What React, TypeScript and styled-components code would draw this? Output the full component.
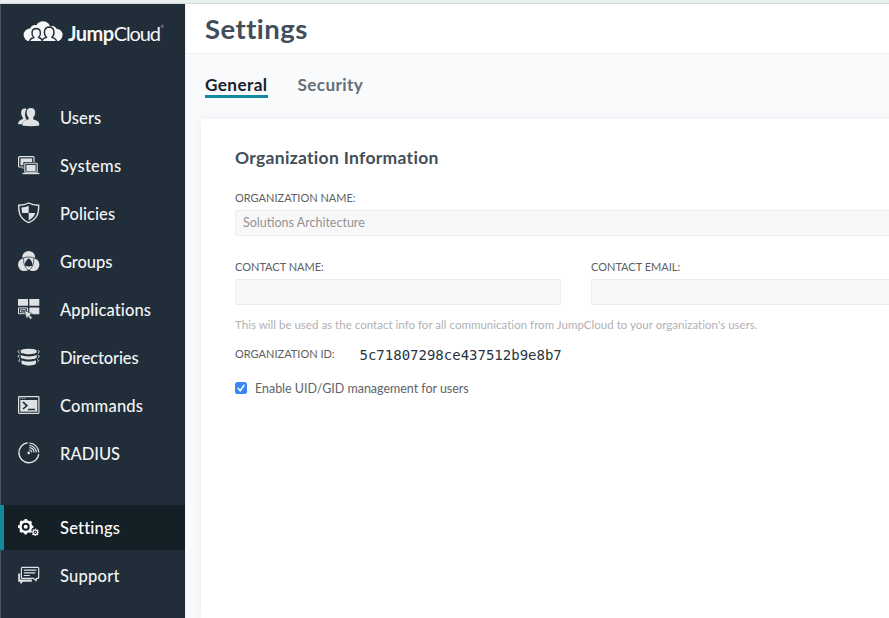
import React from 'react';
import styled, { createGlobalStyle } from 'styled-components';

const INK = '#212d38';
const LIGHT = '#dfe2e5';

const GlobalStyle = createGlobalStyle`
  * { box-sizing: border-box; }
  html, body, #root { height: 100%; }
  body {
    margin: 0;
    overflow: hidden;
    background: #f9fafc;
    font-family: Lato, "Open Sans", sans-serif;
    font-variant-ligatures: none;
  }
  h1, h2 { margin: 0; }
`;

const Page = styled.div`
  display: flex;
  flex-direction: column;
  height: 618px;
  width: 100%;
`;

const TopStrip = styled.div`
  flex: none;
  height: 4px;
  background: #e9eeee;
  border-bottom: 1px solid #d3d9da;
`;

const Body = styled.div`
  display: flex;
  flex: 1;
  min-height: 0;
`;

const Sidebar = styled.aside`
  flex: none;
  width: 185px;
  background: ${INK};
  box-shadow: inset 1px 0 #46535c;
`;

const Brand = styled.div`
  display: flex;
  align-items: flex-start;
  height: 91px;
  padding: 17px 0 0 23px;
`;

const Wordmark = styled.div`
  display: flex;
  margin: 0 0 0 5px;
  color: #f4f6f7;
  font-size: 20px;
  line-height: 24px;
`;

const Jump = styled.span`
  font-weight: 700;
  letter-spacing: -0.5px;
`;

const Cloud = styled.span`
  font-weight: 400;
  letter-spacing: -1.1px;
`;

const Trademark = styled.span`
  margin-left: 1px;
  font-size: 3px;
  line-height: 12px;
`;

const NavList = styled.nav`
  display: flex;
  flex-direction: column;
  gap: 3px;
`;

const NavItem = styled.a<{ $active?: boolean; $tracking: number; $spaced?: boolean }>`
  display: flex;
  align-items: center;
  height: 45px;
  margin-top: ${(p) => (p.$spaced ? '26px' : '0')};
  padding-left: ${(p) => (p.$active ? '13px' : '17px')};
  border-left: ${(p) => (p.$active ? '4px solid #128a9c' : '0')};
  background: ${(p) => (p.$active ? '#151f26' : 'transparent')};
  color: ${(p) => (p.$active ? '#ffffff' : '#f3f5f6')};
  font-size: 16.5px;
  font-weight: 500;
  letter-spacing: ${(p) => p.$tracking}px;
`;

const Glyph = styled.svg`
  flex: none;
  width: 24px;
  height: 23px;
  margin-right: 19px;
  overflow: visible;
`;

const Main = styled.main`
  display: flex;
  flex-direction: column;
  flex: 1;
  min-width: 0;
  background: #f9fafc;
  border-left: 1px solid #eef0f2;
`;

const Header = styled.header`
  flex: none;
  height: 50px;
  padding: 8px 0 0 19px;
  background: #ffffff;
  border-bottom: 1px solid #eff1f3;
`;

const Title = styled.h1`
  color: #424e5a;
  font-size: 27.5px;
  font-weight: 700;
  line-height: 34px;
  letter-spacing: 0.45px;
`;

const Tabs = styled.div`
  display: flex;
  flex: none;
  gap: 30px;
  height: 65px;
  padding: 20px 0 0 19px;
`;

const Tab = styled.a<{ $active?: boolean }>`
  height: 24px;
  border-bottom: 3px solid ${(p) => (p.$active ? '#138a9c' : 'transparent')};
  color: ${(p) => (p.$active ? '#17222c' : '#656f78')};
  font-size: 17.2px;
  font-weight: 700;
  line-height: 21px;
  letter-spacing: ${(p) => (p.$active ? 0.4 : 0.35)}px;
`;

const Card = styled.section`
  flex: 1;
  margin-left: 15px;
  padding: 28px 0 0 34px;
  background: #ffffff;
  border-radius: 3px 0 0 0;
  box-shadow: 0 0 10px rgba(40, 55, 70, 0.08);
`;

const CardTitle = styled.h2`
  margin-bottom: 22px;
  color: #424e5a;
  font-size: 17.5px;
  font-weight: 700;
  line-height: 21px;
  letter-spacing: 0.3px;
`;

const Fields = styled.div`
  display: grid;
  grid-template-columns: 326px 326px;
  column-gap: 30px;
  row-gap: 23px;
`;

const Field = styled.label<{ $wide?: boolean }>`
  display: flex;
  flex-direction: column;
  grid-column: ${(p) => (p.$wide ? '1 / -1' : 'auto')};
`;

const FieldLabel = styled.span`
  height: 20px;
  color: #5d5f62;
  font-size: 11px;
  line-height: 16px;
`;

const Input = styled.input`
  width: 100%;
  height: 26px;
  padding: 0 7px 1px;
  background: #f8f8f8;
  border: 1px solid #ededee;
  border-radius: 2px;
  color: #929294;
  font: 12.5px Lato, sans-serif;
`;

const Hint = styled.p`
  margin: 12px 0 14px;
  color: #b0b1b3;
  font-size: 11.5px;
  line-height: 16px;
  letter-spacing: 0.02px;
`;

const IdRow = styled.div`
  display: flex;
  align-items: flex-start;
  height: 17px;
`;

const IdLabel = styled.span`
  width: 124.5px;
  color: #5d5f62;
  font-size: 11px;
  line-height: 14px;
`;

const IdValue = styled.code`
  color: #273440;
  font: 14px/17px "DejaVu Sans Mono", monospace;
`;

const CheckRow = styled.div`
  display: flex;
  align-items: center;
  height: 16px;
  margin-top: 16px;
  color: #626467;
  font-size: 12.5px;
  letter-spacing: -0.03px;
`;

const CheckBox = styled.span`
  display: flex;
  width: 12px;
  height: 12px;
  margin-right: 8px;
  background: #3b86f7;
  border-radius: 2.5px;
`;

const LogoMark = () => (
  <svg width="40" height="22" viewBox="0 0 40 22">
    <g fill="#f4f6f7">
      <circle cx="7" cy="14" r="6.4" />
      <circle cx="12" cy="9" r="5" />
      <circle cx="20" cy="7.8" r="7.6" />
      <circle cx="33.3" cy="14" r="6.3" />
      <circle cx="29" cy="10" r="5" />
      <rect x="7" y="10" width="26" height="10" />
    </g>
    <g fill="#f4f6f7" stroke={INK} strokeWidth="1.4">
      <path d="M6.5 20.5c.2-2.400 1.800-3.200 4.200-4-2.600-2.800-2.600-8.800 2.500-9 5.100.2 5.100 6.200 2.500 9 2.400.8 4 1.600 4.200 4" />
      <path d="M18.800 20.500c.3-2.700 2-3.400 4.500-4.200-3-3.400-2.700-10.100 2.900-10.300 5.600.2 5.900 6.900 2.900 10.300 2.500.8 4.200 1.500 4.500 4.200" />
    </g>
    <path d="M0 20.800h40" stroke={INK} strokeWidth="1.5" />
  </svg>
);

const UsersIcon = () => (
  <Glyph viewBox="0 0 24 23" fill={LIGHT}>
    <path d="M7.8 2.6C5.2 2.5 4 4.6 4.2 7.2c.1 2 .8 3.4 1.7 4.5v1.4c-2.8 1-4.7 2-4.9 5.1h4c.2-2 2-3.5 4.8-4.4-2-2.8-2.4-8-.2-10.9-.5-.2-1.1-.3-1.8-.3z" />
    <path d="M13.9 2c-2.9 0-4.400 1.800-4.300 4.600.1 2.300.9 3.800 2 5v1.700c-3.300 1-6.300 1.900-6.300 5.100 0 .8.5 1.200 1.200 1.300 4.800.6 10 .6 14.700 0 .7-.1 1.100-.5 1.100-1.300 0-3.200-3.200-4.100-6.100-5.100v-1.700c1.100-1.200 1.900-2.700 2-5 .1-2.800-1.400-4.600-4.300-4.600z" />
  </Glyph>
);

const SystemsIcon = () => (
  <Glyph viewBox="0 0 24 23">
    <rect x="1.600" y="2.600" width="15.400" height="10.400" rx="1" fill="none" stroke={LIGHT} strokeWidth="1.200" />
    <rect x="3.500" y="4.400" width="11.600" height="6.800" fill={LIGHT} />
    <path d="M5 14.800h4v-2h-3z" fill={LIGHT} />
    <rect x="6.400" y="8" width="14.800" height="11" fill={INK} />
    <rect x="7.800" y="9.300" width="12.400" height="9" rx=".7" fill="none" stroke={LIGHT} strokeWidth="1.100" />
    <rect x="9.400" y="10.900" width="9.200" height="6.400" fill={LIGHT} />
    <path d="M5.600 19.500h16.800" stroke={LIGHT} strokeWidth="1.400" />
  </Glyph>
);

const PoliciesIcon = () => (
  <Glyph viewBox="0 0 24 23">
    <path d="M11.700 1C9 2.500 5.700 3.200 1.700 3.200c0 8 1.200 13.800 10 17.400 8.800-3.600 10-9.400 10-17.400-4 0-7.300-.7-10-2.200z" fill="none" stroke={LIGHT} strokeWidth="1.400" />
    <path d="M11.700 3.700c-2.200 1-4.600 1.500-7.200 1.700.1 2 .3 3.900.7 5.600h6.500zM11.700 11h6.500c-.8 3.100-2.600 5.400-6.500 7.400z" fill={LIGHT} />
  </Glyph>
);

const GroupsIcon = () => (
  <Glyph viewBox="0 0 24 23">
    <g fill={LIGHT}>
      <circle cx="11.700" cy="7.300" r="6.400" />
      <circle cx="7.400" cy="14.600" r="6.400" />
      <circle cx="16" cy="14.600" r="6.400" />
    </g>
    <path d="M5 8.300c3.600-1.700 9.800-1.700 13.400 0M11.700 20.500c-3.600-2.200-5.600-7.200-5-12.500M11.700 20.500c3.600-2.200 5.600-7.200 5-12.500" fill="none" stroke={INK} strokeWidth=".7" />
    <path d="M11.700 8.300c2.600 1.700 3.900 4.200 3.900 7.300-2.400 1.200-5.400 1.200-7.800 0 0-3.100 1.300-5.600 3.900-7.300z" fill={INK} />
  </Glyph>
);

const ApplicationsIcon = () => (
  <Glyph viewBox="0 0 24 23">
    <path d="M1 1h10v6.800H1zM12.300 1h10v6.800h-10zM12.300 9.400h10v6.800h-10z" fill={LIGHT} />
    <path d="M1.500 9.900h9v5.800h-9z" fill="none" stroke={LIGHT} />
    <path d="M3.500 11.700h5.200v2.300H3.500z" fill="none" stroke={LIGHT} strokeWidth=".9" />
    <path d="M7.300 12.500l8 3.200-2.600 1.300 2.700 2.900-1.700 1.500-2.600-2.900-1.400 2.500z" fill={LIGHT} stroke={INK} strokeWidth=".6" />
  </Glyph>
);

const DirectoriesIcon = () => (
  <Glyph viewBox="0 0 24 23">
    <g fill={LIGHT}>
      <path d="M3.700 4.700c0-2.700 16-2.700 16 0v1.400c0 2.900-16 2.900-16 0z" />
      <path d="M3.700 9.100c3.500 1.900 12.500 1.900 16 0v2.100c0 2.900-16 2.900-16 0z" />
      <path d="M4.500 14.300c3.500 1.600 10.900 1.600 14.400 0v2.900c0 2.900-14.400 2.900-14.400 0z" />
    </g>
    <path d="M2.600 4.300c-2 .8-2 2 0 2.900M2.600 8.900c-2 .8-2 2 0 2.900M3 13.400c-1.600.7-1.600 1.600 0 2.300M20.800 4.300c2 .8 2 2 0 2.900M20.800 8.900c2 .8 2 2 0 2.900M20.400 13.400c1.600.7 1.600 1.600 0 2.300" fill="none" stroke={LIGHT} strokeWidth="1" />
  </Glyph>
);

const CommandsIcon = () => (
  <Glyph viewBox="0 0 24 23">
    <rect x="1.600" y="2.600" width="20.300" height="16.800" rx=".8" fill="none" stroke={LIGHT} strokeWidth="1.200" />
    <path d="M3.300 6h17v11.700h-17z" fill={LIGHT} />
    <path d="M3.300 4.400h1M5.300 4.400h1M7.300 4.400h1" stroke={LIGHT} strokeWidth=".9" />
    <path d="M6 8.200l3.900 3.400L6 15M11 15.500h7" fill="none" stroke={INK} strokeWidth="1.600" />
  </Glyph>
);

const RadiusIcon = () => (
  <Glyph viewBox="0 0 24 23" fill="none" stroke={LIGHT}>
    <path d="M10.600.8a10 10 0 1 0 11.200 11.300" strokeWidth="1.400" />
    <path d="M12.300 1A10 10 0 0 1 21.800 10.500" strokeWidth="1.200" />
    <path d="M12.300 3.400a7.600 7.600 0 0 1 7.100 7M12.300 5.700a5.200 5.200 0 0 1 4.800 4.700M12.300 7.900a3 3 0 0 1 2.600 2.500" strokeWidth="1.200" />
    <circle cx="11.700" cy="10.900" r="1.300" fill={LIGHT} stroke="none" />
  </Glyph>
);

const SettingsIcon = () => (
  <Glyph viewBox="0 0 24 23" fill="none" stroke="#ffffff">
    <circle cx="8.700" cy="10.700" r="5.300" strokeWidth="2.600" />
    <circle cx="8.700" cy="10.700" r="6.900" strokeWidth="1.600" strokeDasharray="2.700 2.719" strokeDashoffset="1.350" />
    <circle cx="8.700" cy="10.700" r="2" fill="#ffffff" stroke="none" />
    <circle cx="18.300" cy="16.300" r="2.300" strokeWidth="1.100" />
    <circle cx="18.300" cy="16.300" r="3.200" strokeWidth="1.100" strokeDasharray="1.250 1.263" strokeDashoffset=".625" />
    <circle cx="18.300" cy="16.300" r=".8" fill="#ffffff" stroke="none" />
  </Glyph>
);

const SupportIcon = () => (
  <Glyph viewBox="0 0 24 23">
    <path d="M1.200 9.500h1.900v5.900h11.700v2.400H6l-2.400 2.500-.4-2.500h-2z" fill={LIGHT} />
    <path d="M5.300 3.300h15.500c.5 0 .9.400.9.900v9.200c0 .5-.4.900-.9.900h-1.200l-.6 2.400-2.500-2.400H5.300c-.5 0-.9-.4-.9-.9V4.200c0-.5.400-.9.900-.9z" fill="none" stroke={LIGHT} strokeWidth="1.200" />
    <path d="M6.800 6.200h12.500M6.800 8.900h11.500M6.800 11.500h6" stroke={LIGHT} strokeWidth="1.200" />
  </Glyph>
);

const NAV = [
  { label: 'Users', Icon: UsersIcon, tracking: 0.08 },
  { label: 'Systems', Icon: SystemsIcon, tracking: 0.26 },
  { label: 'Policies', Icon: PoliciesIcon, tracking: 0.05 },
  { label: 'Groups', Icon: GroupsIcon, tracking: -0.08 },
  { label: 'Applications', Icon: ApplicationsIcon, tracking: 0.13 },
  { label: 'Directories', Icon: DirectoriesIcon, tracking: -0.15 },
  { label: 'Commands', Icon: CommandsIcon, tracking: 0.23 },
  { label: 'RADIUS', Icon: RadiusIcon, tracking: 0 },
  { label: 'Settings', Icon: SettingsIcon, tracking: 0.2, active: true, spaced: true },
  { label: 'Support', Icon: SupportIcon, tracking: 0.24 },
];

export default function App() {
  return (
    <>
      <GlobalStyle />
      <Page>
        <TopStrip />
        <Body>
          <Sidebar>
            <Brand>
              <LogoMark />
              <Wordmark>
                <Jump>Jump</Jump>
                <Cloud>Cloud</Cloud>
                <Trademark>®</Trademark>
              </Wordmark>
            </Brand>
            <NavList>
              {NAV.map(({ label, Icon, tracking, active, spaced }) => (
                <NavItem key={label} $active={active} $spaced={spaced} $tracking={tracking}>
                  <Icon />
                  {label}
                </NavItem>
              ))}
            </NavList>
          </Sidebar>
          <Main>
            <Header>
              <Title>Settings</Title>
            </Header>
            <Tabs>
              <Tab $active>General</Tab>
              <Tab>Security</Tab>
            </Tabs>
            <Card>
              <CardTitle>Organization Information</CardTitle>
              <Fields>
                <Field $wide>
                  <FieldLabel>ORGANIZATION NAME:</FieldLabel>
                  <Input defaultValue="Solutions Architecture" />
                </Field>
                <Field>
                  <FieldLabel>CONTACT NAME:</FieldLabel>
                  <Input />
                </Field>
                <Field>
                  <FieldLabel>CONTACT EMAIL:</FieldLabel>
                  <Input />
                </Field>
              </Fields>
              <Hint>
                This will be used as the contact info for all communication from JumpCloud to your organization's users.
              </Hint>
              <IdRow>
                <IdLabel>ORGANIZATION ID:</IdLabel>
                <IdValue>5c71807298ce437512b9e8b7</IdValue>
              </IdRow>
              <CheckRow>
                <CheckBox>
                  <svg width="12" height="12" viewBox="0 0 12 12">
                    <path d="M3 6.300l2.200 2.400L9 3.200" fill="none" stroke="#fff" strokeWidth="1.500" strokeLinecap="round" />
                  </svg>
                </CheckBox>
                Enable UID/GID management for users
              </CheckRow>
            </Card>
          </Main>
        </Body>
      </Page>
    </>
  );
}
